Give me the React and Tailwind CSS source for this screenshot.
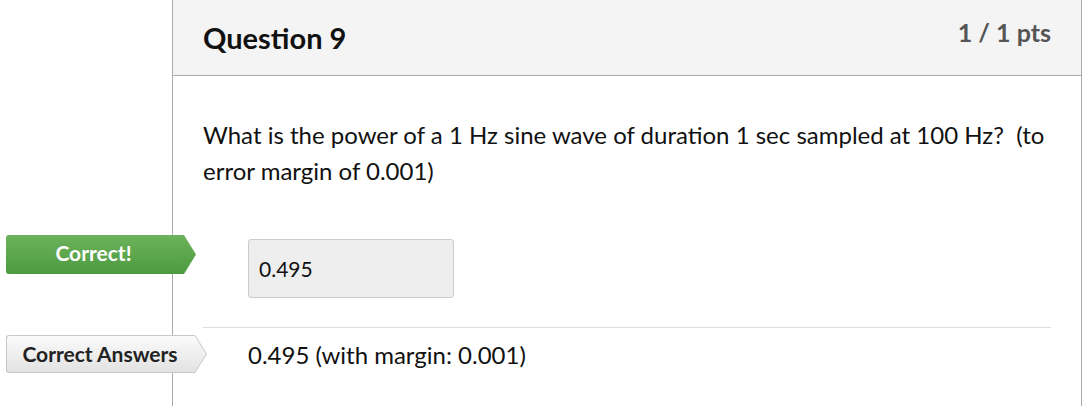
export default function App() {
    return (
        <div className="relative w-[1082px] h-[406px] overflow-hidden bg-white font-['Lato','Liberation_Sans',sans-serif] text-[#000]">
            <div className="ml-[172px] h-full border-l border-r border-[#aaaaaa] flex flex-col">
                <header className="h-[76px] shrink-0 flex justify-between items-start border-b border-[#aaaaaa] bg-[#f4f4f4] pl-[30px] pr-[30px]">
                    <h2 className="mt-[20px] text-[29px] leading-[36px] font-bold text-[#111]">Question 9</h2>
                    <div className="mt-[17px] text-[25px] leading-[30px] font-bold text-[#555]">1 / 1 pts</div>
                </header>
                <div className="px-[30px] flex flex-col">
                    <p className="mt-[41px] text-[24px] leading-[36px] text-[#111]">
                        What is the power of a 1 Hz sine wave of duration 1 sec sampled at 100 Hz?&nbsp; (to error margin of 0.001)
                    </p>
                    <div className="mt-[50px] ml-[45px] w-[206px] h-[59px] rounded-[3px] border border-[#cccccc] bg-[#eeeeee] flex items-center pl-[10px] text-[21px] text-[#111]">
                        0.495
                    </div>
                    <div className="mt-[29px] h-px bg-[#dddddd]" />
                    <div className="mt-[12px] ml-[45px] text-[24px] leading-[30px] text-[#111]">
                        0.495 (with margin: 0.001)
                    </div>
                </div>
            </div>

            <div className="absolute left-[6px] top-[235px] flex items-stretch h-[39px]">
                <div className="w-[175px] rounded-l-[3px] bg-gradient-to-b from-[#6cb35c] to-[#4d9a3f] flex items-center justify-center text-white text-[21px] font-bold pb-[3px]">
                    Correct!
                </div>
                <svg width="15" height="39" viewBox="0 0 15 39" className="block">
                    <defs>
                        <linearGradient id="g1" x1="0" y1="0" x2="0" y2="1">
                            <stop offset="0" stopColor="#6cb35c" />
                            <stop offset="1" stopColor="#4d9a3f" />
                        </linearGradient>
                    </defs>
                    <path d="M0 0 L3 0 L15 19.5 L3 39 L0 39 Z" fill="url(#g1)" />
                </svg>
            </div>

            <div className="absolute left-[6px] top-[335px] flex items-stretch h-[38px]">
                <div className="w-[187px] rounded-l-[3px] border border-r-0 border-[#c8c8c8] bg-gradient-to-b from-[#fbfbfb] to-[#e2e2e2] flex items-center justify-center text-[#222] text-[21px] font-bold">
                    Correct Answers
                </div>
                <svg width="14" height="38" viewBox="0 0 14 38" className="block">
                    <defs>
                        <linearGradient id="g2" x1="0" y1="0" x2="0" y2="1">
                            <stop offset="0" stopColor="#fbfbfb" />
                            <stop offset="1" stopColor="#e2e2e2" />
                        </linearGradient>
                    </defs>
                    <path d="M0 0.5 L2 0.5 L13.5 19 L2 37.5 L0 37.5" fill="url(#g2)" stroke="#c8c8c8" strokeWidth="1" />
                </svg>
            </div>
        </div>
    );
}
